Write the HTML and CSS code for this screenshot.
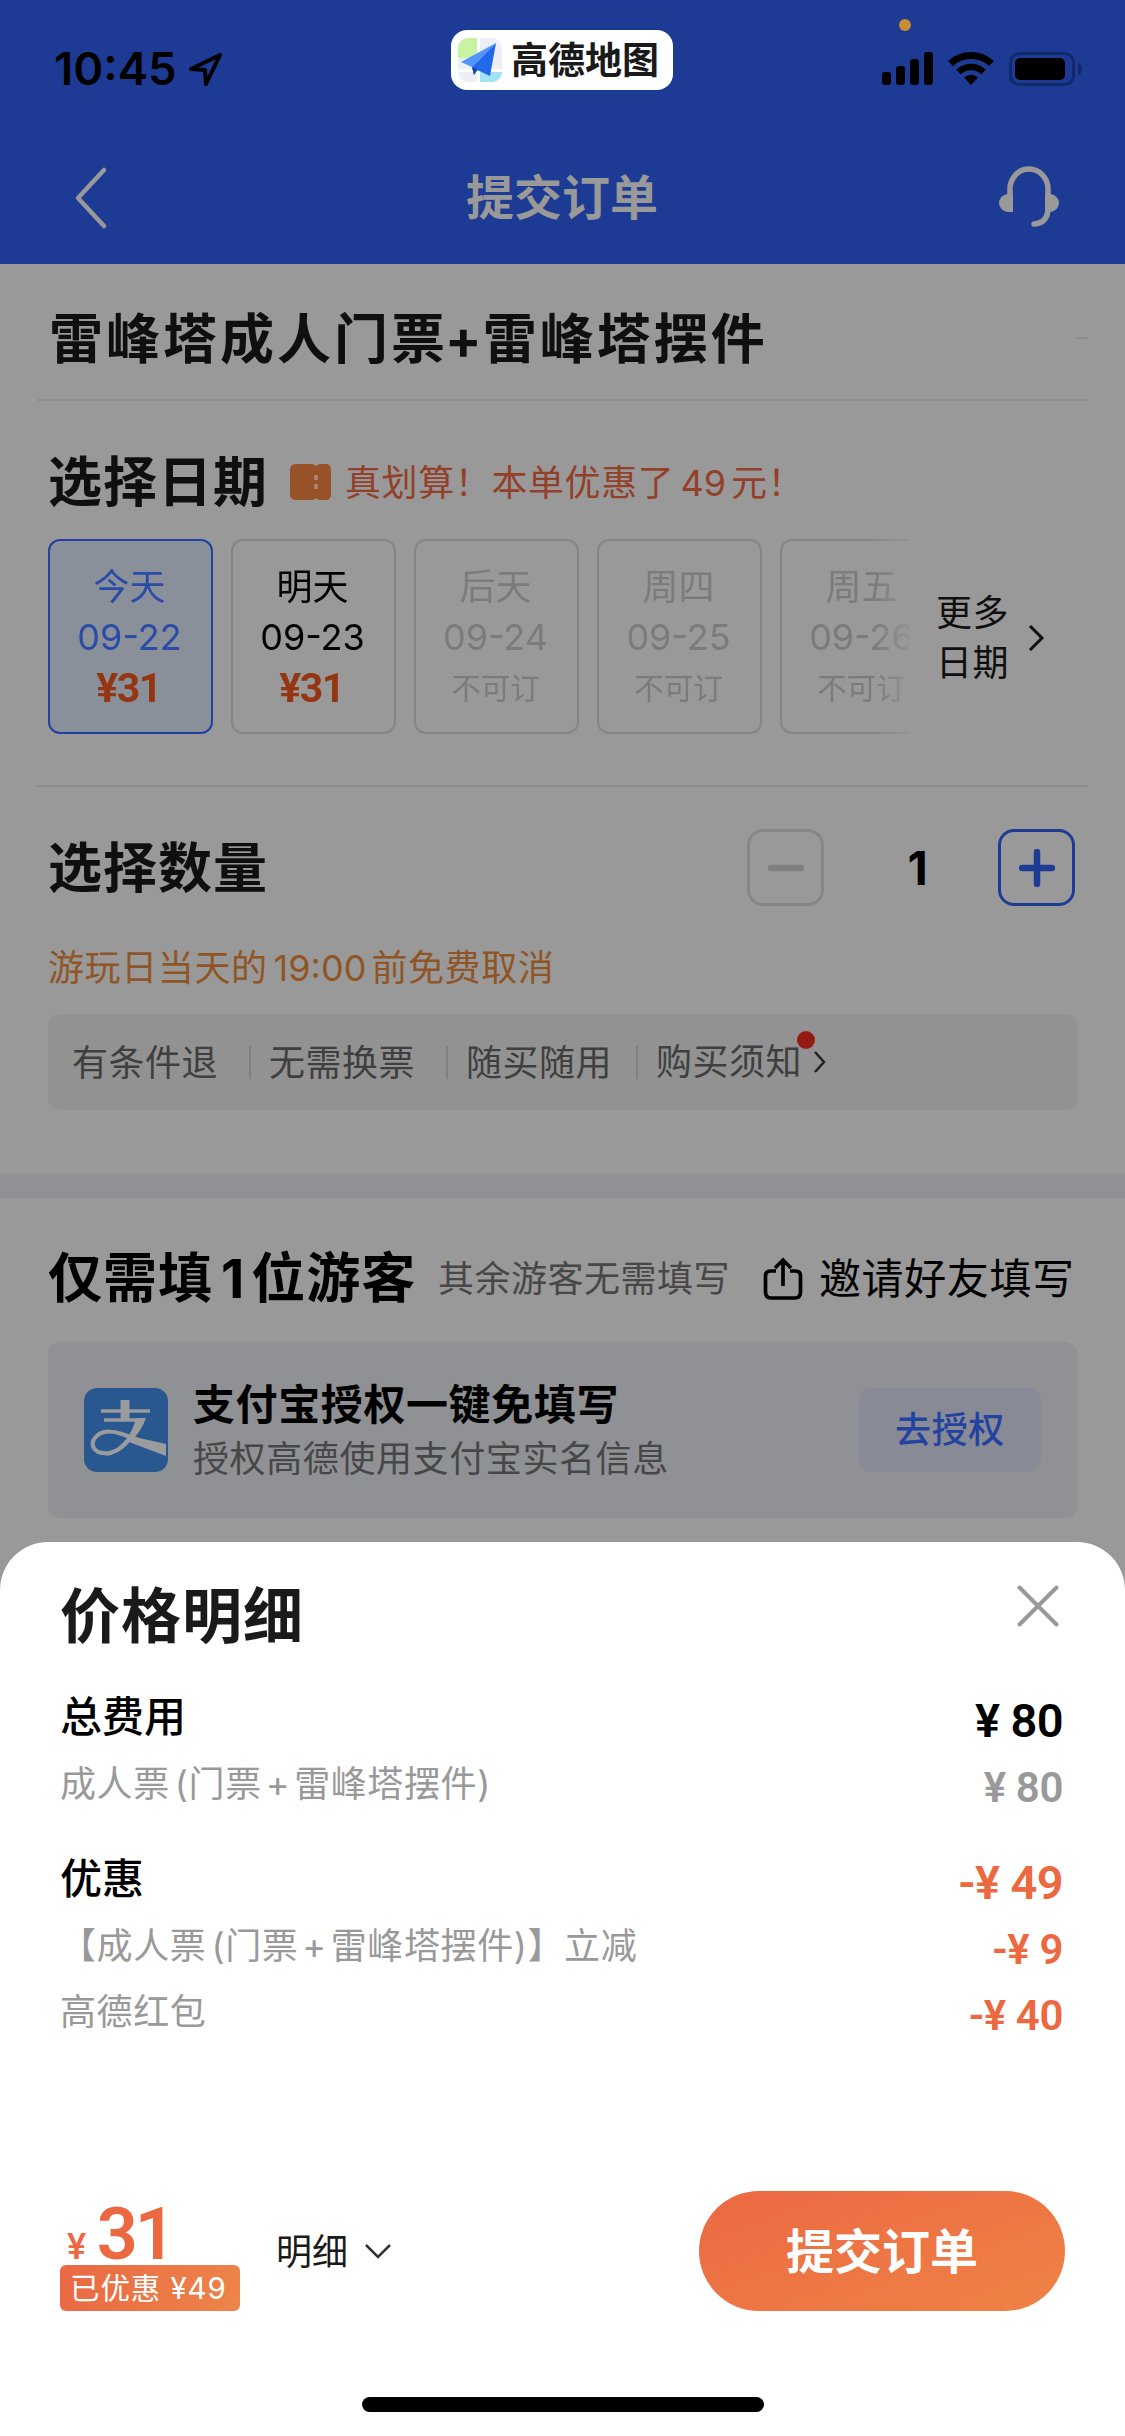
FILE: index.html
```html
<!DOCTYPE html>
<html lang="zh-CN">
<head>
<meta charset="utf-8">
<title>提交订单</title>
<link rel="stylesheet" href="styles.css">
</head>
<body>
<div class="screen">
  <header class="topbar">
    <div class="status">
      <div class="clock">10:45
        <svg class="locate" width="37" height="37" viewBox="0 0 37 37"><path d="M33 4 L4 18 L18 19 L19 33 Z" fill="none" stroke="#000" stroke-width="4" stroke-linejoin="round"/></svg>
      </div>
      <div class="app-pill">
        <svg width="46" height="46" viewBox="0 0 46 46">
          <rect x="1" y="1" width="44" height="44" rx="10" fill="#eceff3"/>
          <path d="M11 1h9v20H1V11A10 10 0 0 1 11 1z" fill="#c8f3a4"/>
          <path d="M23 45V34h22v1a10 10 0 0 1-10 10z" fill="#a2e3f7"/>
          <path d="M20 0h3v46h-3zM0 32h46v3H0z" fill="#fff"/>
          <path d="M39 6 L4 25 L15 30 Z" fill="#4f95fb"/>
          <path d="M39 6 L15 30 L17 38 L20 33 L33 39 Z" fill="#2468ea"/>
          <path d="M15 30 L17 38 L21 32 Z" fill="#1847b4"/>
        </svg>
        <span>高德地图</span>
      </div>
      <div class="signals">
        <i class="mic-dot"></i>
        <svg width="204" height="36" viewBox="0 0 204 36">
          <rect x="0" y="21" width="9" height="13" rx="3"/><rect x="14" y="15" width="9" height="19" rx="3"/><rect x="28" y="8" width="9" height="26" rx="3"/><rect x="42" y="1" width="9" height="33" rx="3"/>
          <path d="M68.500 12.500 A30 30 0 0 1 109.500 12.500" fill="none" stroke="#000" stroke-width="7"/>
          <path d="M76.500 21 A18 18 0 0 1 101.500 21" fill="none" stroke="#000" stroke-width="6.500"/>
          <path d="M89 34 L82 26.500 Q89 21 96 26.500 Z"/>
          <rect x="128.500" y="2.500" width="63" height="31" rx="9" fill="none" stroke="#112a6c" stroke-width="3"/>
          <rect x="133" y="7" width="50" height="22" rx="5"/>
          <path d="M196 12 q4 1 4 6 t-4 6z" fill="#112a6c"/>
        </svg>
      </div>
    </div>
    <nav class="nav">
      <svg width="36" height="64" viewBox="0 0 36 64"><path d="M31 4 L5 32 L31 60" fill="none" stroke="#999" stroke-width="4.500" stroke-linecap="round" stroke-linejoin="round"/></svg>
      <h1>提交订单</h1>
      <svg width="62" height="62" viewBox="0 0 62 62">
        <path d="M12 30 V23 A19 20 0 0 1 50 23 V42 Q50 57 36 58" fill="none" stroke="#999" stroke-width="5.500" stroke-linecap="round"/>
        <path d="M15 28 V46 H10 A9 9 0 0 1 10 28 Z M47 28 V46 H52 A9 9 0 0 0 52 28 Z" fill="#999"/>
      </svg>
    </nav>
  </header>

  <section class="product"><h2>雷峰塔成人门票<span class="plus-sign">+</span>雷峰塔摆件</h2><i class="dash"></i></section>

  <section class="dates">
    <div class="heading">
      <h2>选择日期</h2>
      <svg width="42" height="36" viewBox="0 0 42 36"><path d="M6 0 H23 Q26 3 29 0 H36 Q41 0 41 6 V30 Q41 36 36 36 H29 Q26 33 23 36 H6 Q0 36 0 30 V6 Q0 0 6 0Z" fill="#97522a"/><path d="M26 11v5M26 20v5" stroke="#a9897a" stroke-width="3.500"/></svg>
      <p class="promo">真划算！本单优惠了<span class="num">49</span>元！</p>
    </div>
    <div class="picker">
      <div class="cards">
        <div class="card selected"><span>今天</span><span>09-22</span><b>¥31</b></div>
        <div class="card"><span>明天</span><span>09-23</span><b>¥31</b></div>
        <div class="card off"><span>后天</span><span>09-24</span><small>不可订</small></div>
        <div class="card off"><span>周四</span><span>09-25</span><small>不可订</small></div>
        <div class="card off"><span>周五</span><span>09-26</span><small>不可订</small></div>
      </div>
      <div class="more"><span>更多<br>日期</span>
        <svg width="18" height="28" viewBox="0 0 18 28"><path d="M3 2 L15 14 L3 26" fill="none" stroke="#0f0f0f" stroke-width="3"/></svg>
      </div>
    </div>
  </section>

  <section class="quantity">
    <div class="qty-row">
      <h2>选择数量</h2>
      <div class="stepper">
        <span class="step minus"><svg width="36" height="38" viewBox="0 0 36 38"><path d="M3 19h30" stroke="#7f7f7f" stroke-width="6.500" stroke-linecap="round"/></svg></span>
        <b>1</b>
        <span class="step plus"><svg width="36" height="38" viewBox="0 0 36 38"><path d="M3 19h30M18 3v32" stroke="#1e3c94" stroke-width="6.500" stroke-linecap="round"/></svg></span>
      </div>
    </div>
    <p class="cancel">游玩日当天的<span class="num">19:00</span>前免费取消</p>
    <div class="rules">
      <span>有条件退</span><span>无需换票</span><span>随买随用</span><span class="notice">购买须知<i></i></span>
      <svg width="14" height="24" viewBox="0 0 14 24"><path d="M2 2 L11 12 L2 22" fill="none" stroke="#222" stroke-width="2.500"/></svg>
    </div>
  </section>

  <section class="visitors">
    <div class="visitor-head">
      <h2>仅需填<span class="num">1</span>位游客</h2>
      <span class="hint">其余游客无需填写</span>
      <svg width="40" height="44" viewBox="0 0 40 44"><path d="M13 14 H8 Q2.500 14 2.500 19 V35 Q2.500 41 8 41 H32 Q37.500 41 37.500 35 V19 Q37.500 14 32 14 H27 M20 29 V4 M12 11 L20 3 L28 11" fill="none" stroke="#000" stroke-width="3.700"/></svg>
      <span class="invite">邀请好友填写</span>
    </div>
    <div class="auth">
      <svg width="84" height="84" viewBox="0 0 84 84">
        <rect width="84" height="84" rx="13" fill="#29578f"/>
        <g fill="none" stroke="#999b9d">
          <path d="M41 12 V31" stroke-width="9"/>
          <path d="M17 23 H66 M20 32 H54" stroke-width="3.500"/>
          <path d="M57 31 Q49 50 38 59 Q26 68 14 64 Q6 59 10 51 Q18 39 38 46 Q58 53 81 63" stroke-width="4"/>
        </g>
        <path d="M52 30 H62 Q58 41 51 49 L82 56 V68 L45 54 Q35 67 21 68 Q35 60 43 50 Q49 42 52 30Z" fill="#999b9d"/>
      </svg>
      <div class="auth-text"><strong>支付宝授权一键免填写</strong><span>授权高德使用支付宝实名信息</span></div>
      <span class="auth-btn">去授权</span>
    </div>
  </section>

  <section class="sheet">
    <div class="sheet-head">
      <h2>价格明细</h2>
      <svg width="42" height="42" viewBox="0 0 42 42"><path d="M2.500 2.500 L39.500 39.500 M39.500 2.500 L2.500 39.500" stroke="#999" stroke-width="4" stroke-linecap="round"/></svg>
    </div>
    <div class="line total"><span>总费用</span><b>¥ 80</b></div>
    <div class="line sub"><span>成人票<i class="lp">(</i>门票<i class="pl">+</i>雷峰塔摆件)</span><b>¥ 80</b></div>
    <div class="line total discount"><span>优惠</span><b>-¥ 49</b></div>
    <div class="line sub red"><span>【成人票<i class="lp">(</i>门票<i class="pl">+</i>雷峰塔摆件)】立减</span><b>-¥ 9</b></div>
    <div class="line sub red"><span>高德红包</span><b>-¥ 40</b></div>
    <div class="pay">
      <div class="amount">
        <div class="sum"><small>¥</small><b>31</b></div>
        <div class="saved">已优惠 ¥49</div>
      </div>
      <span class="detail">明细</span>
      <svg width="28" height="16" viewBox="0 0 28 16"><path d="M2 2 L14 14 L26 2" fill="none" stroke="#333" stroke-width="2.500"/></svg>
      <span class="submit">提交订单</span>
    </div>
    <div class="home"></div>
  </section>
</div>
</body>
</html>
```
FILE: styles.css
```css
* { box-sizing: border-box; }
body { margin: 0; }
h1, h2, p { margin: 0; font-weight: 400; }
svg { display: block; flex: none; }
i { font-style: normal; }

.screen {
  position: relative;
  width: 1125px;
  height: 2436px;
  overflow: hidden;
  background: #999;
  color: #0f0f0f;
  font: 36px/50px Inter, "Noto Sans CJK SC", sans-serif;
  letter-spacing: .6px;
  white-space: nowrap;
}
h2 { font-size: 54px; line-height: 60px; letter-spacing: 1px; font-weight: 700; }
.num { margin: 0 5px 0 6px; letter-spacing: 0; }

.topbar { height: 264px; background: #1d3b94; }
.status {
  height: 120px;
  padding: 0 39px 0 54px;
  display: grid;
  grid-template-columns: 397px 222px 1fr;
  align-items: center;
}
.clock {
  display: flex;
  align-items: center;
  gap: 10px;
  padding-top: 18px;
  color: #000;
  font-size: 45.500px;
  font-weight: 600;
  letter-spacing: 0;
}
.app-pill {
  height: 60px;
  padding-left: 6px;
  display: flex;
  align-items: center;
  gap: 8px;
  border-radius: 16px;
  background: #fff;
  color: #1a1a1a;
  font-size: 37px;
  font-weight: 700;
  letter-spacing: 0;
}
.app-pill span { padding-top: 2px; }
.signals { position: relative; justify-self: end; padding-top: 18px; }
.mic-dot {
  position: absolute;
  left: 17px;
  top: -14px;
  width: 12px;
  height: 12px;
  border-radius: 50%;
  background: #c98c34;
}
.nav {
  height: 144px;
  padding: 12px 65px 0 73px;
  display: flex;
  justify-content: space-between;
  align-items: flex-start;
}
.nav svg { margin-top: 34px; }
.nav h1 {
  margin: 41px 0 0 17px;
  color: #999;
  font-size: 48px;
  font-weight: 700;
  line-height: 50px;
  letter-spacing: 0;
}

.product {
  height: 137px;
  margin: 0 37px;
  padding: 46px 0 0 12px;
  display: flex;
  justify-content: space-between;
  border-bottom: 2px solid #8e8e8e;
}
.product h2 { letter-spacing: 3px; }
.plus-sign { margin: 0 -2px -0px -3px; }
.dash { width: 13px; height: 2px; margin-top: 27px; background: #8e8e8e; }

.dates { height: 386px; margin: 0 37px; padding: 51px 0 0 11px; border-bottom: 2px solid #8e8e8e; }
.heading { display: flex; align-items: center; height: 60px; }
.heading h2 { width: 242px; padding-top: 2px; }
.promo { margin-left: 13px; padding-top: 1px; color: #93402a; letter-spacing: .6px; }
.picker { display: flex; margin-top: 27px; }
.cards {
  width: 861px;
  display: flex;
  gap: 18px;
  overflow: hidden;
  -webkit-mask-image: linear-gradient(to right, #000 825px, transparent 872px);
  mask-image: linear-gradient(to right, #000 825px, transparent 872px);
}
.card {
  flex: none;
  width: 165px;
  height: 195px;
  padding: 21px 2px 0 0;
  border: 2px solid #858585;
  border-radius: 12px;
  color: #000;
  text-align: center;
}
.card > * { display: block; letter-spacing: 0; }
.card b { color: #943611; font: 700 41px/52px Roboto, sans-serif; letter-spacing: -1.500px; margin-left: -2px; }
.card small { font-size: 29.500px; line-height: 52px; }
.card.selected { background: #8a909a; border-color: #2440a0; color: #2a4ba6; }
.card.off { color: #7b7b7b; }
.more { display: flex; align-items: center; gap: 18px; margin-left: 27px; padding-top: 2px; }

.quantity { height: 387px; padding: 41px 48px 0; }
.qty-row { display: flex; justify-content: space-between; height: 79px; align-items: center; padding-right: 2px; }
.qty-row h2 { padding-top: 2px; }
.stepper { display: flex; align-items: center; }
.step {
  width: 77px;
  height: 77px;
  display: grid;
  place-items: center;
  border: 3px solid #868686;
  border-radius: 16px;
}
.step.plus { border-color: #1e3c94; }
.stepper b { width: 174px; padding-left: 14px; text-align: center; color: #000; font-size: 47px; font-weight: 700; }
.cancel { margin-top: 36px; color: #8f5526; }
.rules {
  height: 96px;
  margin-top: 21px;
  padding-left: 24px;
  display: flex;
  align-items: center;
  border-radius: 12px;
  background: #929292;
  color: #3f3f3f;
}
.rules > span { line-height: 32px; padding: 1px 31px 0 0; margin-right: 18px; border-right: 2px solid #808080; letter-spacing: .5px; }
.rules > span:nth-child(3) { padding-right: 24px; }
.rules .notice { position: relative; padding: 0; margin-right: 11px; border: 0; }
.notice i {
  position: absolute;
  right: -13px;
  top: -15px;
  width: 18px;
  height: 18px;
  border-radius: 50%;
  background: #951b12;
}

.visitors { padding: 50px 48px 0; border-top: 24px solid #909194; }
.visitor-head { display: flex; align-items: center; height: 62px; color: #000; }
.hint { margin: 0 33px 0 23px; color: #474747; letter-spacing: .5px; }
.visitor-head h2 { width: 367px; }
.visitor-head h2 .num { margin: 0 7px 0 8px; }
.invite { margin-left: 16px; font-size: 42px; }
.auth {
  height: 176px;
  margin-top: 32px;
  padding: 0 36px;
  display: flex;
  align-items: center;
  border-radius: 12px;
  background: #909194;
}
.auth-text { display: flex; flex-direction: column; margin-left: 25px; color: #474747; }
.auth-text strong { color: #000; font-size: 42px; line-height: 58px; font-weight: 600; }
.auth-btn {
  width: 182px;
  margin-left: auto;
  border-radius: 12px;
  background: #888b96;
  color: #2442a0;
  font-weight: 500;
  line-height: 84px;
  text-align: center;
}

.sheet {
  position: absolute;
  left: 0;
  right: 0;
  bottom: 0;
  height: 894px;
  padding: 43px 60px 0;
  border-radius: 48px 48px 0 0;
  background: #fff;
}
.sheet-head { display: flex; justify-content: space-between; padding-right: 6px; height: 98px; }
.sheet-head h2 { font-size: 60px; line-height: 62px; color: #1a1a1a; }
.line { display: flex; justify-content: space-between; align-items: center; height: 66px; padding-right: 2px; }
.line b { font-family: Roboto, sans-serif; font-weight: 600; letter-spacing: 0; padding-top: 7px; }
.total { color: #000; height: 68px; }
.total span { font-size: 42px; font-weight: 500; letter-spacing: 0; }
.total b { font-size: 47px; letter-spacing: -.6px; }
.sub { color: #999; }
.sub span { letter-spacing: .6px; }
.sub b { font-size: 42px; letter-spacing: -.4px; }
.lp { margin-left: 5px; }
.pl { margin: 0 4px; }
.discount { margin-top: 28px; }
.discount b, .red b { color: #ec6840; }

.pay { display: flex; align-items: center; height: 120px; margin-top: 146px; }
.amount { width: 180px; padding-top: 5px; color: #ec6840; }
.sum { display: flex; align-items: baseline; gap: 10px; height: 69px; padding-left: 7px; font-family: Roboto, sans-serif; }
.sum small { font-size: 36px; line-height: 36px; font-weight: 500; }
.sum b { font-size: 72px; line-height: 78px; font-weight: 600; letter-spacing: -3px; }
.saved {
  height: 46px;
  padding-left: 10px;
  border-radius: 6px;
  background: linear-gradient(100deg, #ea6843, #ed8549);
  color: #fff;
  font-size: 29.500px;
  line-height: 46px;
  letter-spacing: .9px;
}
.detail { margin: 0 16px 0 36px; padding-top: 2px; color: #1a1a1a; letter-spacing: 0; }
.submit {
  width: 366px;
  height: 120px;
  margin-left: auto;
  border-radius: 60px;
  background: linear-gradient(160deg, #ec6843, #ee8345);
  color: #fff;
  font-size: 48px;
  font-weight: 700;
  line-height: 122px;
  letter-spacing: 0;
  text-align: center;
}
.home { width: 402px; height: 15px; margin: 86px auto 0; border-radius: 8px; background: #000; }
```
